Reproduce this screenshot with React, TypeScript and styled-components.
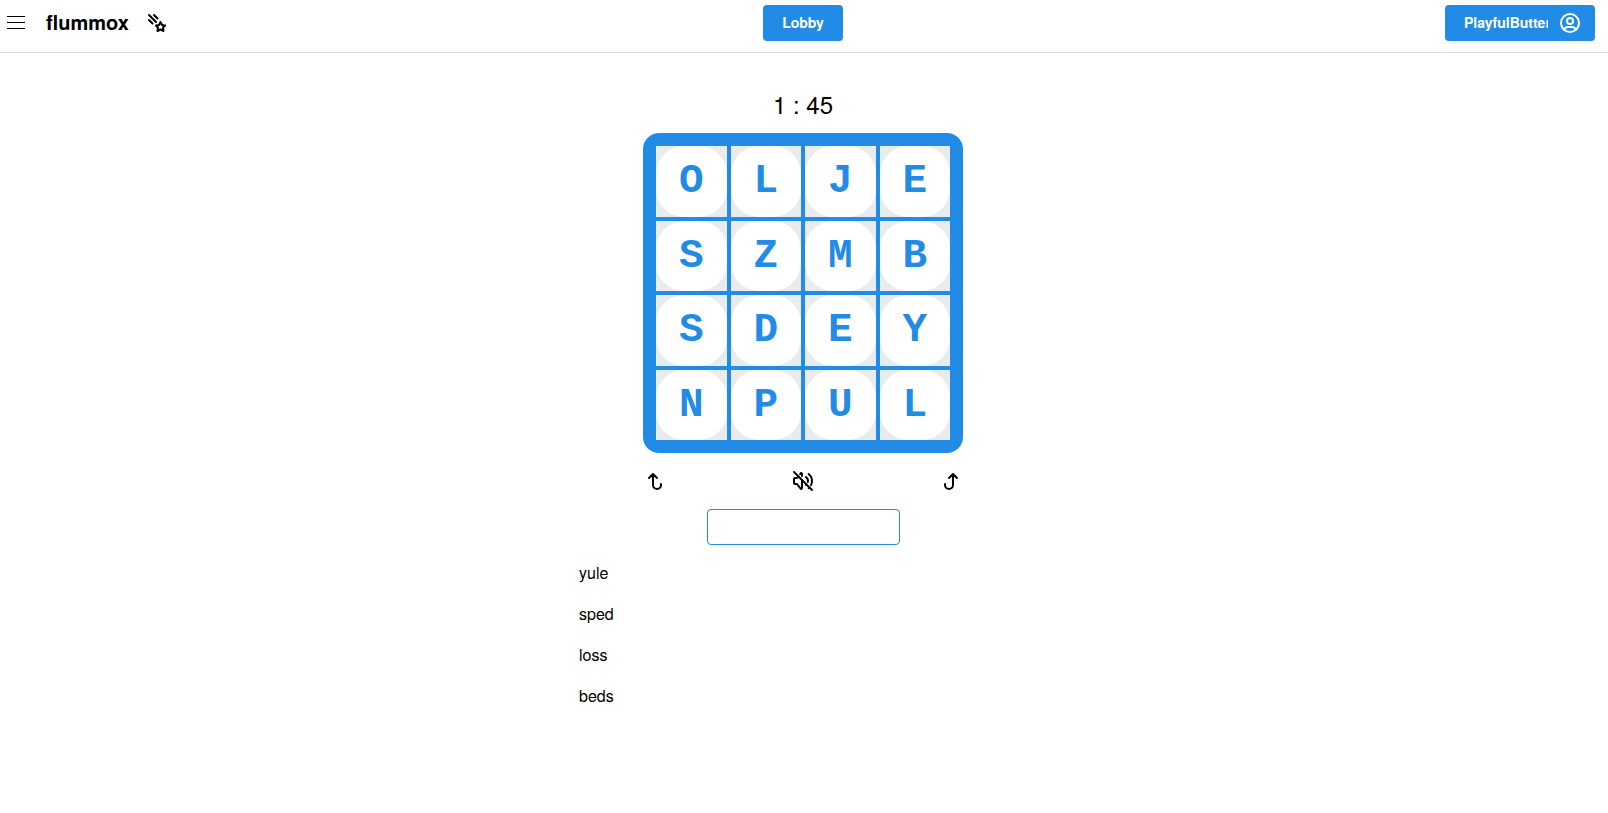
import React, { useState } from 'react';
import styled, { createGlobalStyle } from 'styled-components';
import { TbArrowBack, TbArrowForward, TbComet, TbUserCircle, TbVolumeOff } from 'react-icons/tb';

const BLUE = '#228be6';

const GlobalStyle = createGlobalStyle`
  *, *::before, *::after { box-sizing: border-box; }
  body {
    margin: 0;
    background: #fff;
    color: #000;
    font-family: "TeX Gyre Heros", "Liberation Sans", Arial, sans-serif;
    font-size: 16px;
    line-height: 25px;
  }
  button, input { font: inherit; color: inherit; }
`;

const Header = styled.header`
  display: grid;
  grid-template-columns: 1fr auto 1fr;
  align-items: start;
  padding: 5px 13px 11px 11px;
  border-bottom: 1px solid #dee2e6;
`;

const Brand = styled.div`
  display: flex;
  align-items: center;
  height: 36px;
  margin-left: -9px;
`;

const Burger = styled.button`
  display: flex;
  flex-direction: column;
  gap: 5px;
  width: 28px;
  padding: 5px 5px 6px;
  border: 0;
  background: none;
  cursor: pointer;
`;

const BurgerLine = styled.span`
  height: 1px;
  background: #000;
`;

const Title = styled.h1`
  margin: 0 16px;
  padding-bottom: 2px;
  font-size: 20px;
  line-height: 32px;
  font-weight: 700;
`;

const HeaderButton = styled.button`
  display: flex;
  align-items: center;
  height: 36px;
  padding: 0 19px;
  border: 0;
  border-radius: 4px;
  background: ${BLUE};
  color: #fff;
  font-size: 14px;
  font-weight: 600;
  cursor: pointer;
`;

const ProfileButton = styled(HeaderButton)`
  justify-self: end;
  gap: 10px;
  padding-right: 13px;
`;

const ButtonLabel = styled.span`
  padding-bottom: 2px;
`;

const UserName = styled(ButtonLabel)`
  width: 84px;
  overflow: hidden;
  white-space: nowrap;
`;

const Game = styled.main`
  display: flex;
  flex-direction: column;
  align-items: center;
  padding: 38px 2px 0 0;
`;

const Timer = styled.time`
  font-size: 24px;
  line-height: 26px;
`;

const Board = styled.div`
  display: grid;
  grid-template-columns: repeat(4, 1fr);
  gap: 4px;
  width: 320px;
  aspect-ratio: 1;
  margin-top: 16px;
  padding: 13px;
  border-radius: 16px;
  background: ${BLUE};
`;

const Cell = styled.div`
  display: grid;
  background: #e9ecef;
`;

const Tile = styled.div`
  display: grid;
  place-items: center;
  border-radius: 28px;
  background: #fff;
  color: ${BLUE};
  font-family: "Liberation Mono", "Courier New", monospace;
  font-size: 41px;
  line-height: 48px;
  font-weight: 700;
`;

const Controls = styled.div`
  display: flex;
  justify-content: space-between;
  width: 320px;
  margin-top: 16px;
  padding: 0 1px;
`;

const IconButton = styled.button<{ $turn?: number }>`
  display: flex;
  padding: 0;
  border: 0;
  background: none;
  cursor: pointer;

  svg { transform: rotate(${(p) => p.$turn ?? 0}deg); }
`;

const WordInput = styled.input`
  width: 193px;
  height: 36px;
  margin-top: 16px;
  padding: 0 12px;
  border: 1px solid ${BLUE};
  border-radius: 4px;
  background: #fff;
  text-align: center;
  outline: none;
`;

const WordList = styled.ul`
  display: flex;
  flex-direction: column;
  gap: 16px;
  width: 448px;
  margin: 15px 0 0;
  padding: 0;
  list-style: none;
`;

const letters = 'OLJESZMBSDEYNPUL'.split('');
const words = ['yule', 'sped', 'loss', 'beds'];

export default function App() {
  const [entry, setEntry] = useState('');

  return (
    <>
      <GlobalStyle />
      <Header>
        <Brand>
          <Burger type="button" aria-label="Open menu">
            <BurgerLine />
            <BurgerLine />
            <BurgerLine />
          </Burger>
          <Title>flummox</Title>
          <TbComet size={24} />
        </Brand>
        <HeaderButton type="button">
          <ButtonLabel>Lobby</ButtonLabel>
        </HeaderButton>
        <ProfileButton type="button">
          <UserName>PlayfulButter</UserName>
          <TbUserCircle size={24} />
        </ProfileButton>
      </Header>
      <Game>
        <Timer>1 : 45</Timer>
        <Board>
          {letters.map((letter, i) => (
            <Cell key={i}>
              <Tile>{letter}</Tile>
            </Cell>
          ))}
        </Board>
        <Controls>
          <IconButton type="button" aria-label="Rotate board left" $turn={90}>
            <TbArrowBack size={24} />
          </IconButton>
          <IconButton type="button" aria-label="Unmute">
            <TbVolumeOff size={24} />
          </IconButton>
          <IconButton type="button" aria-label="Rotate board right" $turn={-90}>
            <TbArrowForward size={24} />
          </IconButton>
        </Controls>
        <WordInput
          aria-label="Word"
          value={entry}
          onChange={(e) => setEntry(e.target.value)}
        />
        <WordList>
          {words.map((word) => (
            <li key={word}>{word}</li>
          ))}
        </WordList>
      </Game>
    </>
  );
}
